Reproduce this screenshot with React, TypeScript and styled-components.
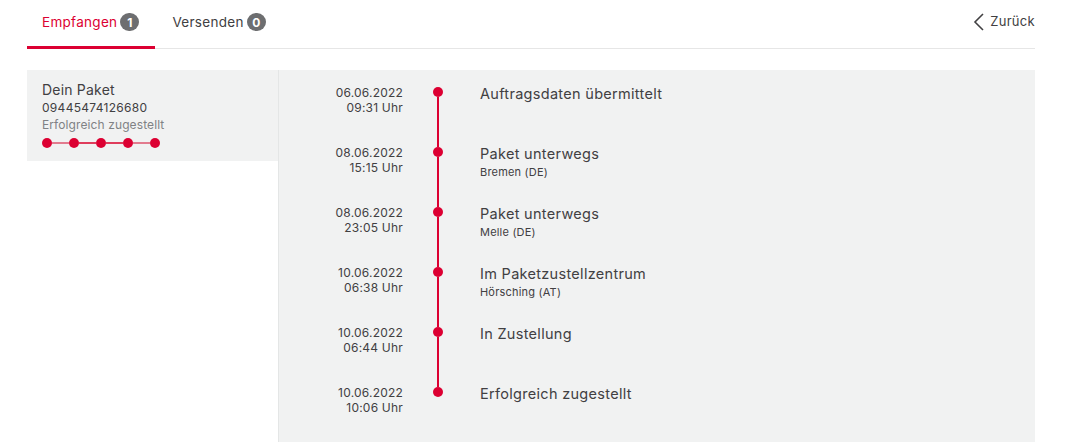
import React from 'react';
import styled, { createGlobalStyle } from 'styled-components';

const colors = {
  red: '#dc0032',
  text: '#414042',
  gray: '#808285',
  panel: '#f1f2f2',
  line: '#e6e6e6',
  badge: '#6d6e70',
};

const GlobalStyle = createGlobalStyle`
  * { box-sizing: border-box; }
  body {
    margin: 0;
    background: #ffffff;
    font-family: Inter, Lato, 'Liberation Sans', sans-serif;
    color: ${colors.text};
  }
`;

const events = [
  { date: '06.06.2022', time: '09:31 Uhr', title: 'Auftragsdaten übermittelt' },
  { date: '08.06.2022', time: '15:15 Uhr', title: 'Paket unterwegs', place: 'Bremen (DE)' },
  { date: '08.06.2022', time: '23:05 Uhr', title: 'Paket unterwegs', place: 'Melle (DE)' },
  { date: '10.06.2022', time: '06:38 Uhr', title: 'Im Paketzustellzentrum', place: 'Hörsching (AT)' },
  { date: '10.06.2022', time: '06:44 Uhr', title: 'In Zustellung' },
  { date: '10.06.2022', time: '10:06 Uhr', title: 'Erfolgreich zugestellt' },
];

const App = () => {
  return (
    <Page>
      <GlobalStyle />
      <Header>
        <Tabs>
          <Tab $active>
            Empfangen<Badge>1</Badge>
          </Tab>
          <Tab>
            Versenden<Badge>0</Badge>
          </Tab>
        </Tabs>
        <BackLink>
          <svg width="12" height="18" viewBox="0 0 12 18" fill="none">
            <path d="M10 1L2 9l8 8" stroke={colors.text} strokeWidth="1.6" />
          </svg>
          Zurück
        </BackLink>
      </Header>
      <Content>
        <ParcelCard>
          <ParcelTitle>Dein Paket</ParcelTitle>
          <ParcelNumber>09445474126680</ParcelNumber>
          <ParcelStatus>Erfolgreich zugestellt</ParcelStatus>
          <Progress>
            {[0, 1, 2, 3, 4].map((i) => (
              <React.Fragment key={i}>
                {i > 0 && <ProgressLink $light={i === 1 || i === 4} />}
                <ProgressDot />
              </React.Fragment>
            ))}
          </Progress>
        </ParcelCard>
        <Timeline>
          {events.map((e, i) => (
            <Row key={i}>
              <DateCol>
                <div>{e.date}</div>
                <div>{e.time}</div>
              </DateCol>
              <Marker>
                <Segment $height={17} $hidden={i === 0} />
                <Dot />
                <Segment $grow $hidden={i === events.length - 1} />
              </Marker>
              <Info>
                <EventTitle>{e.title}</EventTitle>
                {e.place && <EventPlace>{e.place}</EventPlace>}
              </Info>
            </Row>
          ))}
          <Spacer />
        </Timeline>
      </Content>
    </Page>
  );
};
export default App;

const Page = styled.div`
  width: 1008px;
  margin-left: 27px;
`;
const Header = styled.div`
  display: flex;
  justify-content: space-between;
  align-items: stretch;
  height: 49px;
  border-bottom: 1px solid ${colors.line};
`;
const Tabs = styled.div`
  display: flex;
`;
const Tab = styled.div<{ $active?: boolean }>`
  display: flex;
  align-items: center;
  height: 49px;
  padding: 0 16px 2px 15px;
  margin-bottom: -1px;
  font-size: 13.5px;
  letter-spacing: 0.3px;
  color: ${(p) => (p.$active ? colors.red : colors.text)};
  border-bottom: 3px solid ${(p) => (p.$active ? colors.red : 'transparent')};
  & + & {
    padding-left: 17px;
  }
`;
const Badge = styled.span`
  display: inline-flex;
  align-items: center;
  justify-content: center;
  width: 19px;
  height: 18px;
  margin-left: 3px;
  border-radius: 9px;
  background: ${colors.badge};
  color: #fff;
  font-size: 12px;
  font-weight: 700;
  letter-spacing: 0;
`;
const BackLink = styled.div`
  display: flex;
  align-items: flex-start;
  gap: 5px;
  padding-top: 13px;
  font-size: 13px;
  line-height: 17px;
  letter-spacing: 0.3px;
  color: ${colors.text};
`;
const Content = styled.div`
  display: grid;
  grid-template-columns: 251px 1fr;
  margin-top: 21px;
  align-items: start;
`;
const ParcelCard = styled.div`
  background: ${colors.panel};
  height: 91px;
  padding: 11px 15px 0;
`;
const ParcelTitle = styled.div`
  font-size: 14px;
  line-height: 18px;
  letter-spacing: 0.2px;
  color: ${colors.text};
`;
const ParcelNumber = styled.div`
  font-size: 12px;
  line-height: 17px;
  letter-spacing: 0.3px;
  color: ${colors.text};
`;
const ParcelStatus = styled.div`
  font-size: 12px;
  line-height: 17px;
  letter-spacing: 0.1px;
  color: ${colors.gray};
`;
const Progress = styled.div`
  display: flex;
  align-items: center;
  margin-top: 5px;
`;
const ProgressDot = styled.span`
  width: 10px;
  height: 10px;
  border-radius: 50%;
  background: ${colors.red};
`;
const ProgressLink = styled.span<{ $light?: boolean }>`
  width: 17px;
  height: 2px;
  background: ${(p) => (p.$light ? '#e27b8e' : '#df3d5c')};
`;
const Timeline = styled.div`
  background: ${colors.panel};
  border-left: 1px solid #e4e6e6;
  min-height: 380px;
`;
const Row = styled.div`
  display: flex;
  height: 60px;
`;
const DateCol = styled.div`
  width: 124px;
  padding-top: 15px;
  text-align: right;
  font-size: 12px;
  line-height: 15px;
  letter-spacing: 0.2px;
  color: ${colors.text};
`;
const Marker = styled.div`
  width: 20px;
  margin-left: 25px;
  display: flex;
  flex-direction: column;
  align-items: center;
`;
const Segment = styled.span<{ $height?: number; $grow?: boolean; $hidden?: boolean }>`
  width: 2px;
  height: ${(p) => (p.$height ? `${p.$height}px` : 'auto')};
  flex: ${(p) => (p.$grow ? 1 : 'none')};
  background: ${(p) => (p.$hidden ? 'transparent' : colors.red)};
`;
const Dot = styled.span`
  width: 10px;
  height: 10px;
  border-radius: 50%;
  background: ${colors.red};
`;
const Info = styled.div`
  margin-left: 32px;
  padding-top: 14px;
`;
const EventTitle = styled.div`
  font-size: 14.5px;
  line-height: 20px;
  letter-spacing: 0.3px;
  color: ${colors.text};
`;
const EventPlace = styled.div`
  font-size: 11px;
  line-height: 16px;
  letter-spacing: 0.2px;
  color: ${colors.text};
`;
const Spacer = styled.div`
  height: 40px;
`;
